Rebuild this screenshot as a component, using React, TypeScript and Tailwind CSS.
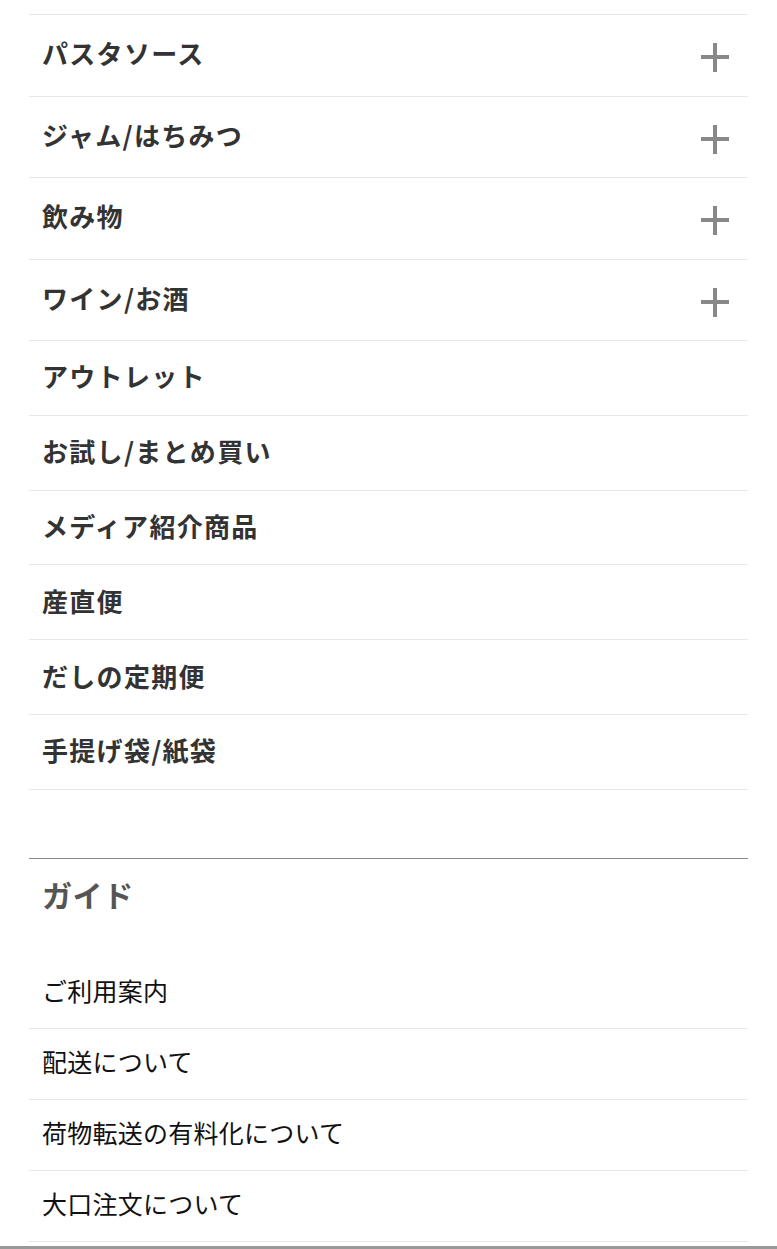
const FONT = { fontFamily: '"Noto Sans CJK JP", "Noto Sans", sans-serif' };

const accordion = ["パスタソース", "ジャム/はちみつ", "飲み物", "ワイン/お酒"];
const plain = [
  "アウトレット",
  "お試し/まとめ買い",
  "メディア紹介商品",
  "産直便",
  "だしの定期便",
  "手提げ袋/紙袋",
];
const guide = ["ご利用案内", "配送について", "荷物転送の有料化について", "大口注文について"];

function Plus() {
  return (
    <span className="relative block w-[28px] h-[29px] mt-[5px]">
      <span className="absolute left-0 right-0 top-[12px] h-[4px] bg-[#888]" />
      <span className="absolute top-0 bottom-0 left-[12px] w-[4px] bg-[#888]" />
    </span>
  );
}

export default function App() {
  return (
    <div className="bg-white min-h-[1249px] overflow-hidden" style={FONT}>
      <div className="mx-[29px] pt-[14px]">
        <ul className="border-t border-[#e8e8e8]">
          {accordion.map((label) => (
            <li
              key={label}
              className="h-[81.5px] border-b border-[#e8e8e8] flex items-center justify-between pl-[13px] pr-[19px]"
            >
              <span className="text-[26px] font-bold tracking-[0.05em] text-[#333] -mt-[5px]">{label}</span>
              <Plus />
            </li>
          ))}
          {plain.map((label) => (
            <li
              key={label}
              className="h-[74.8px] border-b border-[#e8e8e8] flex items-center pl-[13px]"
            >
              <span className="text-[26px] font-bold tracking-[0.05em] text-[#333] -mt-[4px]">{label}</span>
            </li>
          ))}
        </ul>

        <div className="mt-[68px] border-t border-[#888]">
          <h2 className="h-[99px] pl-[13px] pt-[13px] text-[30px] font-bold tracking-[0.02em] text-[#555]">
            ガイド
          </h2>
          <ul>
            {guide.map((label) => (
              <li
                key={label}
                className="h-[71px] border-b border-[#e8e8e8] flex items-center pl-[13px]"
              >
                <span className="text-[25px] tracking-[0.01em] text-[#111] -mt-[4px]">{label}</span>
              </li>
            ))}
          </ul>
        </div>
      </div>
      <div className="mt-[4px] h-[40px] bg-[#999]" />
    </div>
  );
}
